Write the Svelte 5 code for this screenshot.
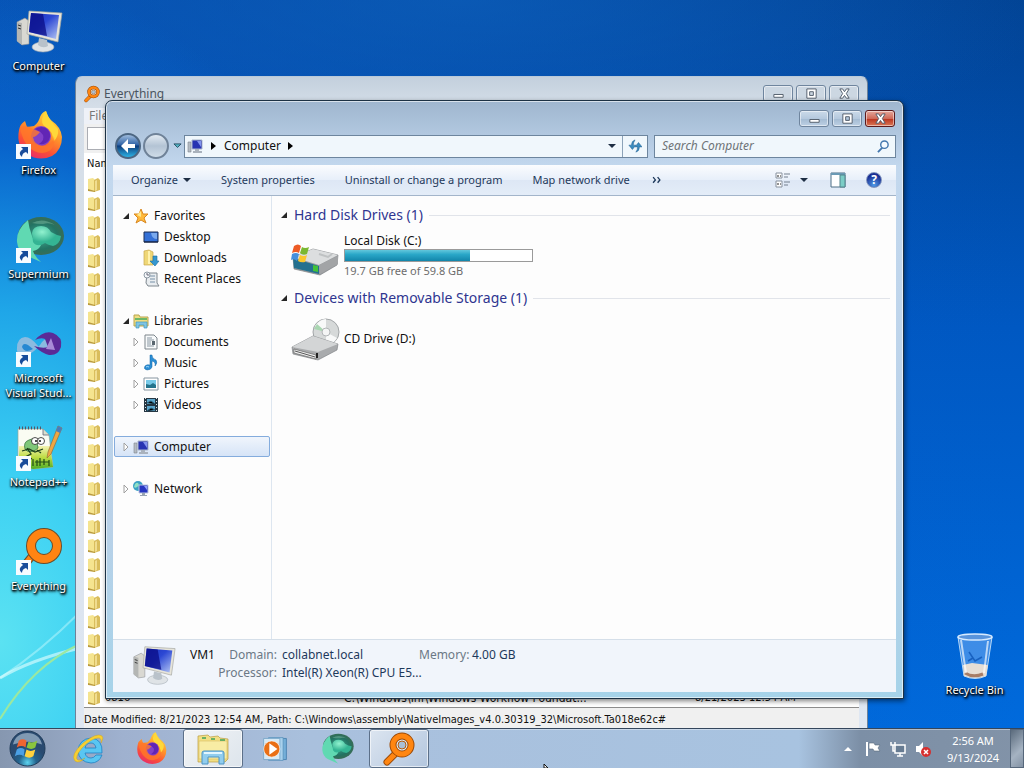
<script lang="ts">
	type TreeItem = { label: string; icon: string; selected?: boolean; children?: TreeItem[] };

	const shortcuts = [
		{ label: 'Computer', icon: 'computer', link: false },
		{ label: 'Firefox', icon: 'firefox', link: true },
		{ label: 'Supermium', icon: 'supermium', link: true },
		{ label: 'Microsoft Visual Stud...', icon: 'vstudio', link: true },
		{ label: 'Notepad++', icon: 'notepad', link: true },
		{ label: 'Everything', icon: 'ring', link: true }
	];

	const tree: TreeItem[] = [
		{
			label: 'Favorites',
			icon: 'star',
			children: [
				{ label: 'Desktop', icon: 'desktop' },
				{ label: 'Downloads', icon: 'downloads' },
				{ label: 'Recent Places', icon: 'recent' }
			]
		},
		{
			label: 'Libraries',
			icon: 'libraries',
			children: [
				{ label: 'Documents', icon: 'documents' },
				{ label: 'Music', icon: 'music' },
				{ label: 'Pictures', icon: 'pictures' },
				{ label: 'Videos', icon: 'videos' }
			]
		},
		{ label: 'Computer', icon: 'pc', selected: true },
		{ label: 'Network', icon: 'network' }
	];

	const commands = ['System properties', 'Uninstall or change a program', 'Map network drive'];

	const tasks = [
		{ label: 'Internet Explorer', icon: 'ie', open: false },
		{ label: 'Firefox', icon: 'firefox', open: false },
		{ label: 'Windows Explorer', icon: 'explorer', open: true, bright: true },
		{ label: 'Windows Media Player', icon: 'wmp', open: false },
		{ label: 'Supermium', icon: 'supermium', open: false },
		{ label: 'Everything', icon: 'magnifier', open: true }
	];

	const results = Array.from({ length: 28 }, (_, i) =>
		i === 27
			? {
					name: '0816',
					path: 'C:\\Windows\\Inf\\Windows Workflow Foundat...',
					date: '8/21/2023 12:54 AM'
				}
			: { name: '', path: '', date: '' }
	);

	const disk = { free: 19.7, total: 59.8 };
	const used = $derived(((disk.total - disk.free) / disk.total) * 100);

	let query = $state('');
	let filter = $state('');
</script>

{#snippet icon(name: string)}
	{#if name === 'computer'}
		<svg class="art" viewBox="0 0 48 48" aria-hidden="true">
			<path d="M2 14 10 10 14 13V36L7 37 2 33Z" fill="#d9d8d2" stroke="#8b8f94" stroke-width=".6" />
			<path d="M2 14 7 15V37L2 33Z" fill="#b4b6b4" />
			<path d="M3 17 6 18M3 20 6 21" stroke="#333" />
			<ellipse cx="28" cy="39" rx="11" ry="5" fill="#dfe3e6" stroke="#9fa8b0" stroke-width=".6" />
			<path d="M24 30 32 32 33 38Q28 41 23 37Z" fill="#b9c2ca" />
			<path d="M14 3 47 5 43 34 12 26Z" fill="#e6e4da" stroke="#a2a59f" stroke-width=".7" />
			<path d="M16 5 44 7 41 31 14 24Z" fill="url(#screen)" />
			<path d="M16 5 28 6 32 28 14 24Z" fill="#0a0c86" opacity=".75" />
		</svg>
	{:else if name === 'firefox'}
		<svg class="art" viewBox="0 0 48 48" aria-hidden="true">
			<path
				d="M4 18Q5 12 10 9L12 15 19 14Q24 10 25 5 27 0 31-1 32 5 37 9 46 15 47 25 47 38 37 44 24 50 12 42 1 34 4 18Z"
				fill="url(#fox)"
			/>
			<path d="M31-1Q24 8 29 14 39 19 38 30 44 25 43 17 34 8 31-1Z" fill="#ffd83a" />
			<circle cx="26" cy="24" r="10" fill="#8140c8" />
			<path d="M20 17Q27 13 32 17 37 22 34 28 31 33 24 32 30 28 28 23 25 19 20 17Z" fill="#6125b5" />
			<path d="M5 16Q12 12 18 17L25 20Q21 25 18 25 19 33 28 34 38 34 39 24 41 40 27 41 10 40 5 16Z" fill="#ff7829" opacity=".8" />
		</svg>
	{:else if name === 'supermium'}
		<svg class="art" viewBox="0 0 48 48" aria-hidden="true">
			<ellipse cx="26" cy="20" rx="23" ry="19" fill="url(#orb)" />
			<path d="M13 4Q1 14 2 26 3 35 10 39L26 46Q20 41 18 35 24 34 26 29 19 27 17 20 14 12 13 4Z" fill="#60d9b2" />
			<path d="M17 17Q18 10 26 10 33 10 36 16 41 19 46 20 45 28 38 30 33 29 30 27 22 32 18 26Z" fill="url(#mint)" />
			<path d="M17 7Q28 1 40 9 34 6 28 8 21 8 17 7Z" fill="#7bb79d" opacity=".5" />
		</svg>
	{:else if name === 'vstudio'}
		<svg class="art" viewBox="0 0 48 48" aria-hidden="true">
			<path d="M2 28Q2 18 10 17 16 17 23 26 29 34 37 31 44 26 38 20 30 16 25 25 14 38 6 35 1 33 2 28Z" fill="#8bbbe0" />
			<path d="M7 27Q8 22 13 25L18 29Q10 34 7 27Z" fill="#2688d2" />
			<path d="M20 20Q29 10 38 13 48 17 46 27 43 36 34 35 28 34 19 26Q28 29 33 27L30 19Q26 17 20 20Z" fill="#5b2a97" />
			<path d="M31 29 36 18 40 30Z" fill="#a98bd7" />
		</svg>
	{:else if name === 'notepad'}
		<svg class="art" viewBox="0 0 48 48" aria-hidden="true">
			<path d="M3 5H28L34 11 38 43 18 45 3 42Z" fill="#fafcf3" stroke="#9ba696" stroke-width=".7" />
			<path d="M4 22H35L38 43 18 45 4 42Z" fill="url(#lime)" />
			<path d="M4 4H28" stroke="#556" stroke-width="3" stroke-dasharray="1 2" />
			<path d="M28 5V11H34" fill="#d9dfcf" stroke="#667" stroke-width=".8" />
			<path d="M10 25Q8 18 14 16 20 13 22 18L23 24Q18 29 12 27Z" fill="#7fc779" stroke="#2d6a36" stroke-width=".7" />
			<circle cx="20" cy="17" r="3.500" fill="#fff" stroke="#222" stroke-width=".8" />
			<circle cx="26" cy="17" r="3.500" fill="#fff" stroke="#222" stroke-width=".8" />
			<circle cx="21" cy="17" r="1" fill="#111" /><circle cx="25" cy="17" r="1" fill="#111" />
			<path d="M7 27 14 25 20 28 28 25M12 24 16 30 12 32 17 35M22 26 26 29" fill="none" stroke="#20401c" stroke-width="1.300" />
			<path d="M18 42V35M22 42V36M25 42V34M29 41V35M34 42V36M20 38H34" stroke="#204b18" stroke-width="1.200" />
			<path d="M43 2 47 4 36 30 32 34 33 28Z" fill="#eea744" stroke="#8b6638" stroke-width=".6" />
			<path d="M43 2 47 4 45 9 41 7Z" fill="#487cbe" />
		</svg>
	{:else if name === 'ring'}
		<svg class="art" viewBox="0 0 48 48" aria-hidden="true">
			<path d="M17 28 5 43" stroke="#6b4c2a" stroke-width="8" />
			<path d="M17 28 5 43" stroke="#ff8413" stroke-width="6" />
			<circle cx="29" cy="18" r="13" fill="none" stroke="#6b4c2a" stroke-width="10" />
			<circle cx="29" cy="18" r="13" fill="none" stroke="#ff8413" stroke-width="8" />
		</svg>
	{:else if name === 'magnifier'}
		<svg class="art" viewBox="0 0 32 32" aria-hidden="true">
			<path d="M15 18 4 29" stroke="#9d4b08" stroke-width="7" stroke-linecap="round" />
			<path d="M15 18 4 29" stroke="#ff8611" stroke-width="5" stroke-linecap="round" />
			<circle cx="19" cy="12" r="9" fill="#dce8f2" stroke="#9d4b08" stroke-width="7" />
			<circle cx="19" cy="12" r="9" fill="none" stroke="#ff8611" stroke-width="5" />
			<circle cx="19" cy="12" r="4" fill="#a9bfd6" stroke="#b85d0c" />
		</svg>
	{:else if name === 'ie'}
		<svg class="art" viewBox="0 0 32 32" aria-hidden="true">
			<path
				d="M29 20H12Q13 25 18 25 21 25 23 22H29Q26 30 18 30 6 29 5 18 6 6 18 5 30 6 29 20ZM12 15H23Q22 10 18 10 13 10 12 15Z"
				fill="#59c6f2"
				fill-rule="evenodd"
				stroke="#1f82c4"
				stroke-width=".8"
			/>
			<path d="M2 28Q-3 22 10 10 24-1 29 3 31 5 28 10 29 5 25 5 19 5 9 15 1 25 5 27 8 28 12 25 6 31 2 28Z" fill="#f6cf31" stroke="#c99d18" stroke-width=".4" />
		</svg>
	{:else if name === 'explorer'}
		<svg class="art" viewBox="0 0 32 32" aria-hidden="true">
			<path d="M1 3 11 2 13 4 21 3 23 5 31 6V26L28 29H1Z" fill="#f2df83" stroke="#b99c42" stroke-width=".7" />
			<path d="M2 8H30V26H2Z" fill="#f8eca4" stroke="#d7bd61" stroke-width=".6" />
			<path d="M5 5H9M14 6H18M23 7H28" stroke="#40a35b" stroke-width="1.500" />
			<path d="M5 31V20Q5 18 7 18H25Q27 18 27 20V31H22V24H11V31Z" fill="#91cdee" stroke="#4c94c5" />
			<path d="M7 20H25" stroke="#e1f6ff" stroke-width="2" />
		</svg>
	{:else if name === 'wmp'}
		<svg class="art" viewBox="0 0 32 32" aria-hidden="true">
			<path d="M12 3H30V29H12Z" fill="#75afd9" stroke="#427dab" />
			<path d="M8 2H26V30H8Z" fill="#a9d1ec" stroke="#5a91bb" />
			<path d="M2 3H22V29H2Z" fill="#d6e9f5" stroke="#73a3c6" />
			<circle cx="12" cy="16" r="10" fill="#e96f16" stroke="#fff" stroke-width=".8" />
			<path d="M9 9 19 16 9 23Z" fill="#fff" />
		</svg>
	{:else if name === 'bin'}
		<svg class="art" viewBox="0 0 48 48" aria-hidden="true">
			<path d="M7 5 41 5 35 44Q24 49 13 44Z" fill="#9cc9ff" fill-opacity=".4" stroke="#b9d9f7" />
			<path d="M12 33 21 31 37 33 35 44Q24 48 13 44Z" fill="#e6ded5" />
			<path d="M14 41Q22 46 32 42" fill="none" stroke="#a77d67" stroke-width="3" />
			<ellipse cx="24" cy="5" rx="17" ry="3" fill="#5994dc" stroke="#d6eaff" stroke-width="1.500" />
			<path d="M10 8 15 41M37 9 33 41" stroke="#fff" opacity=".65" stroke-width="2" />
			<path d="M18 20 24 29 31 25M17 29 22 26" fill="none" stroke="#1861c0" stroke-width="1.500" />
		</svg>
	{:else if name === 'star'}
		<svg class="art" viewBox="0 0 16 16" aria-hidden="true">
			<path d="M8 1 10 6 15 6 11 10 13 15 8 12 3 15 5 10 1 6 6 6Z" fill="#ffb93b" stroke="#d88822" />
			<path d="M8 3V9L4 7" fill="#ffe98d" />
		</svg>
	{:else if name === 'desktop'}
		<svg class="art" viewBox="0 0 16 16" aria-hidden="true">
			<path d="M1 3H15V13H1Z" fill="#3470d6" stroke="#1d2f55" />
			<path d="M8 4 14 4 14 10Q9 10 8 4Z" fill="#79a9ee" /><path d="M1 13H15" stroke="#111c38" />
		</svg>
	{:else if name === 'downloads'}
		<svg class="art" viewBox="0 0 16 16" aria-hidden="true">
			<path d="M1 1 6 0 10 2V15H1Z" fill="#efd777" stroke="#c8a84a" stroke-width=".7" />
			<path d="M6 1V14" stroke="#fff2ad" stroke-width="2" />
			<path d="M10 6H14V11H16L12 16 7 11H10Z" fill="#3597cf" stroke="#1d6d9e" stroke-width=".6" />
		</svg>
	{:else if name === 'recent'}
		<svg class="art" viewBox="0 0 16 16" aria-hidden="true">
			<path d="M4 2H14V12L16 15H5L3 12Z" fill="#e9edf0" stroke="#7e878e" />
			<path d="M7 5H12M7 8H12M7 11H12" stroke="#7690a7" />
			<circle cx="4" cy="4" r="3" fill="#f4f7fa" stroke="#8f9ba5" /><path d="M4 2V4H6" fill="none" stroke="#667" />
		</svg>
	{:else if name === 'libraries'}
		<svg class="art" viewBox="0 0 16 16" aria-hidden="true">
			<path d="M1 2H6L7 4H15V13H1Z" fill="#efdd82" stroke="#b9a54e" />
			<path d="M2 6H14" stroke="#6db868" stroke-width="2" />
			<path d="M3 15V9H14V15H11V12H6V15Z" fill="#80c5e3" stroke="#4398bf" stroke-width=".7" />
		</svg>
	{:else if name === 'documents'}
		<svg class="art" viewBox="0 0 16 16" aria-hidden="true">
			<path d="M2 1H11L14 4V15H2Z" fill="#f8fafb" stroke="#7c858b" />
			<path d="M4 4H9M4 6H11M4 8H8M4 10H8M4 12H11" stroke="#8997a2" /><path d="M9 7H12V11H9Z" fill="#59666f" />
		</svg>
	{:else if name === 'music'}
		<svg class="art" viewBox="0 0 16 16" aria-hidden="true">
			<path d="M7 0H9Q9 4 13 5 15 8 12 11 13 7 9 6V12Q8 15 4 15 0 14 2 11 4 9 7 10Z" fill="#2b8ed5" stroke="#1767a5" stroke-width=".5" />
			<path d="M3 12Q4 11 6 12" stroke="#a7dcfa" fill="none" />
		</svg>
	{:else if name === 'pictures'}
		<svg class="art" viewBox="0 0 16 16" aria-hidden="true">
			<path d="M1 2H15V14H1Z" fill="#fff" stroke="#8695a0" /><path d="M3 4H13V12H3Z" fill="#76c9e8" />
			<path d="M3 8 7 9 10 7 13 9V12H3Z" fill="#23738c" />
		</svg>
	{:else if name === 'videos'}
		<svg class="art" viewBox="0 0 16 16" aria-hidden="true">
			<path d="M1 1H15V15H1Z" fill="#263743" /><path d="M4 2H12V7H4ZM4 9H12V14H4Z" fill="#5ba5cb" />
			<path d="M2.500 1V15M13.500 1V15" stroke="#dce6ea" stroke-dasharray="1 2" /><path d="M4 6 8 4 12 7M4 14 8 11 12 13" stroke="#275d79" />
		</svg>
	{:else if name === 'pc'}
		<svg class="art" viewBox="0 0 16 16" aria-hidden="true">
			<path d="M1 4H4V14H1Z" fill="#b5bcc4" stroke="#7c858f" stroke-width=".6" />
			<path d="M5 2H15V11H5Z" fill="#2733b2" stroke="#a9b5ca" /><path d="M10 3H14V9Z" fill="#8394ee" />
			<path d="M8 11H12V13H15V15H6V13H8Z" fill="#a9b2bd" />
		</svg>
	{:else if name === 'network'}
		<svg class="art" viewBox="0 0 16 16" aria-hidden="true">
			<circle cx="5" cy="5" r="5" fill="#3aa0c5" /><path d="M2 3Q5 0 6 4 3 8 1 6Z" fill="#8fe1c5" />
			<path d="M6 4H15V12H6Z" fill="#2736c1" stroke="#bcc7de" /><path d="M11 5H14V9Z" fill="#91a2ff" />
			<path d="M9 12H12V14H14V15H7V14H9Z" fill="#98a4b2" />
		</svg>
	{:else if name === 'disk'}
		<svg class="art" viewBox="0 0 48 48" aria-hidden="true">
			<path d="M2 25 22 17 47 23 46 33 29 43 3 37Z" fill="#9a9da0" stroke="#73777a" stroke-width=".6" />
			<path d="M2 25 22 17 47 23 28 33Z" fill="#dcdedf" /><path d="M2 26 28 34V42L3 36Z" fill="#25718f" />
			<path d="M28 33 47 24V32L29 42Z" fill="#a2a4a6" /><path d="M22 33 27 34V40L22 39Z" fill="#43c339" />
			<path d="M28 22 37 25 41 22" fill="none" stroke="#bfc2c3" stroke-width="2" />
			<path d="M3 14Q7 11 10 14L8 21Q5 19 1 21Z" fill="#ed5b26" /><path d="M11 15Q14 17 18 15L16 22Q12 24 9 21Z" fill="#7ab832" />
			<path d="M1 22Q5 20 8 22L6 29Q3 26 0 28Z" fill="#448fdd" /><path d="M9 23Q13 25 16 23L14 30Q10 31 7 29Z" fill="#fac72d" />
		</svg>
	{:else if name === 'cd'}
		<svg class="art" viewBox="0 0 48 48" aria-hidden="true">
			<circle cx="35" cy="17" r="13" fill="#d6d9d9" stroke="#a2a6a8" />
			<path d="M35 17 24 11Q29 4 35 4ZM35 17 46 23Q42 30 35 30Z" fill="#f8f9f9" /><path d="M35 17 23 14 26 9Z" fill="#a9d6b1" />
			<circle cx="35" cy="17" r="4" fill="#f4f5f5" stroke="#b1b5b7" />
			<path d="M1 32 22 21 47 29 46 35 27 45 2 39Z" fill="#a9abad" stroke="#777b7e" stroke-width=".6" />
			<path d="M1 32 22 21 47 29 27 37Z" fill="#d3d5d6" /><path d="M3 34 25 40V44L3 38Z" fill="#f2f2f2" stroke="#666" stroke-width=".7" />
			<path d="M4 36 24 42" stroke="#555" /><path d="M26 38V43" stroke="#222" stroke-width="2" />
		</svg>
	{/if}
{/snippet}

{#snippet captionButtons()}
	<div class="caption-buttons">
		<button aria-label="Minimize">
			<svg viewBox="0 0 14 12"><path d="M2 7H12V10H2Z" fill="#fff" stroke="#4f5a68" /></svg>
		</button>
		<button aria-label="Maximize">
			<svg viewBox="0 0 14 12"><path d="M2 1H12V11H2ZM5 4V8H9V4Z" fill="#fff" fill-rule="evenodd" stroke="#4f5a68" /></svg>
		</button>
		<button class="close" aria-label="Close">
			<svg viewBox="0 0 14 12"><path d="M2 1H5L7 4 9 1H12L9 6 12 11H9L7 8 5 11H2L5 6Z" fill="#fff" stroke="#4f5a68" /></svg>
		</button>
	</div>
{/snippet}

{#snippet treeRow(item: TreeItem, child: boolean, parent: TreeItem | null)}
	<button class="tree-row" class:child class:selected={item.selected}>
		<svg class="twisty" viewBox="0 0 8 8" aria-hidden="true">
			{#if item.children}
				<path d="M7 1V7H1Z" fill="#262626" />
			{:else if parent?.label !== 'Favorites'}
				<path d="M2 0 6 4 2 8Z" fill="#fff" stroke="#a0a0a0" />
			{/if}
		</svg>
		<span class="icon16">{@render icon(item.icon)}</span>
		{item.label}
	</button>
{/snippet}

<svg class="defs" aria-hidden="true">
	<defs>
		<linearGradient id="screen" x1="0" x2="1" y1="0" y2="1">
			<stop offset="0" stop-color="#1b2fbc" /><stop offset=".45" stop-color="#2c48d4" /><stop offset="1" stop-color="#b5c7f4" />
		</linearGradient>
		<linearGradient id="fox" x1=".8" x2=".3" y1="0" y2="1">
			<stop offset="0" stop-color="#ffe640" /><stop offset=".45" stop-color="#ff922a" /><stop offset=".75" stop-color="#fb4e37" /><stop offset="1" stop-color="#e62b6d" />
		</linearGradient>
		<radialGradient id="orb">
			<stop offset="0" stop-color="#42aa91" /><stop offset=".7" stop-color="#237363" /><stop offset="1" stop-color="#386d56" />
		</radialGradient>
		<radialGradient id="mint" cx=".35" cy=".3">
			<stop offset="0" stop-color="#91f2cf" /><stop offset="1" stop-color="#34b493" />
		</radialGradient>
		<linearGradient id="lime" x1="0" x2="0" y1="0" y2="1">
			<stop offset="0" stop-color="#f3f3b2" /><stop offset=".5" stop-color="#bddc43" /><stop offset="1" stop-color="#4eac27" />
		</linearGradient>
		<radialGradient id="start" cx=".5" cy=".9">
			<stop offset="0" stop-color="#5cd3ef" /><stop offset=".5" stop-color="#23638e" /><stop offset="1" stop-color="#294a70" />
		</radialGradient>
	</defs>
</svg>

<div class="screen">
	<main class="desktop">
		<svg class="streaks" viewBox="0 0 120 130" aria-hidden="true">
			<path d="M0 78Q40 52 80 12" stroke="#dcffff" stroke-width="2" opacity=".4" />
			<path d="M0 78Q30 60 80 48" stroke="#e6ffff" stroke-width="3" opacity=".6" />
			<path d="M0 119Q32 66 80 44" stroke="#9be8a0" stroke-width="2" />
		</svg>

		<nav class="shortcuts" aria-label="Desktop">
			{#each shortcuts as s (s.label)}
				<button class="shortcut">
					<span class="icon48">
						{@render icon(s.icon)}
						{#if s.link}
							<svg class="link-mark" viewBox="0 0 15 15" aria-hidden="true">
								<path d="M0 0H15V15H0Z" fill="#f7fbff" /><path d="M5 3H12V10L10 8Q6 9 6 13 1 9 7 5Z" fill="#174c9b" />
							</svg>
						{/if}
					</span>
					<span>{s.label}</span>
				</button>
			{/each}
		</nav>

		<button class="shortcut recycle">
			<span class="icon48">{@render icon('bin')}</span>
			<span>Recycle Bin</span>
		</button>

		<section class="window everything" aria-label="Everything">
			<header>
				<span class="icon16">{@render icon('magnifier')}</span>
				<span class="title">Everything</span>
				{@render captionButtons()}
			</header>
			<div class="menu">File</div>
			<div class="filter"><input aria-label="Search" bind:value={filter} /></div>
			<div class="list">
				<table>
					<thead>
						<tr><th>Name</th><th>Path</th><th>Date Modified</th></tr>
					</thead>
					<tbody>
						{#each results as r}
							<tr>
								<td>
									<svg class="folder" viewBox="0 0 16 16" aria-hidden="true">
										<path d="M2 2 7 1 9 3V15L2 13Z" fill="#f5e48f" /><path d="M8 3 12 1 14 3V13L8 15Z" fill="#d9bd5c" />
										<path d="M9 4 11 3V13L9 14Z" fill="#f0dd90" /><path d="M2 12 9 14V15L2 14Z" fill="#b99a3e" />
									</svg>{r.name}
								</td>
								<td class="path">{r.path}</td>
								<td>{r.date}</td>
							</tr>
						{/each}
					</tbody>
				</table>
			</div>
			<footer>Date Modified: 8/21/2023 12:54 AM, Path: C:\Windows\assembly\NativeImages_v4.0.30319_32\Microsoft.Ta018e62c#</footer>
		</section>

		<section class="window explorer" aria-label="Computer">
			<header>{@render captionButtons()}</header>

			<div class="nav-row">
				<button class="round back" aria-label="Back">
					<svg viewBox="0 0 16 16"><path d="M8 1 1 8 8 15V10H15V6H8Z" fill="#fff" /></svg>
				</button>
				<button class="round" aria-label="Forward"></button>
				<button class="plain pages" aria-label="Recent pages">
					<svg viewBox="0 0 10 6"><path d="M1 1H9L5 5Z" fill="#53b3c5" stroke="#244b60" /></svg>
				</button>
				<div class="address">
					<span class="icon16">{@render icon('pc')}</span>
					<svg class="chevron" viewBox="0 0 5 8"><path d="M0 0 5 4 0 8Z" /></svg>
					<a href="#computer">Computer</a>
					<svg class="chevron" viewBox="0 0 5 8"><path d="M0 0 5 4 0 8Z" /></svg>
					<button class="plain history" aria-label="Previous locations">
						<svg viewBox="0 0 8 4"><path d="M0 0H8L4 4Z" /></svg>
					</button>
					<button class="plain refresh" aria-label="Refresh">
						<svg viewBox="0 0 16 16">
							<path d="M8 1Q4 2 4 7H1L5 12 9 7H6Q6 4 8 1Z" fill="#3b8cc0" stroke="#235f92" stroke-width=".6" />
							<path d="M9 15Q13 14 13 9H16L12 4 8 9H11Q11 12 9 15Z" fill="#3b8cc0" stroke="#235f92" stroke-width=".6" />
						</svg>
					</button>
				</div>
				<div class="search">
					<input placeholder="Search Computer" aria-label="Search Computer" bind:value={query} />
					<svg viewBox="0 0 14 14" aria-hidden="true">
						<path d="M6 8 1 13" stroke="#4276ad" stroke-width="2" /><circle cx="8" cy="5" r="4" fill="#f4faff" stroke="#4276ad" stroke-width="1.500" />
					</svg>
				</div>
			</div>

			<div class="client">
				<div class="toolbar">
					<button class="plain">
						Organize
						<svg class="caret" viewBox="0 0 8 4"><path d="M0 0H8L4 4Z" /></svg>
					</button>
					{#each commands as command (command)}
						<button class="plain">{command}</button>
					{/each}
					<button class="plain overflow" aria-label="More commands">
						<svg class="more" viewBox="0 0 8 7"><path d="M1 1 3 3.500 1 6M5 1 7 3.500 5 6" fill="none" stroke="#1e395b" stroke-width="1.200" /></svg>
					</button>
					<div class="tools">
						<button class="plain" aria-label="Change your view">
							<svg class="tool" viewBox="0 0 16 16">
								<path d="M1 1H7V6H1ZM1 9H7V15H1Z" fill="#fff" stroke="#87919e" /><path d="M2 4H4M5 4H6M2 12H4M5 12H6" stroke="#222" />
								<path d="M9 2H15M9 5H13M9 10H15M9 13H13" stroke="#75808f" />
							</svg>
						</button>
						<button class="plain" aria-label="More options">
							<svg class="caret" viewBox="0 0 8 4"><path d="M0 0H8L4 4Z" /></svg>
						</button>
						<button class="plain pane" aria-label="Show the preview pane">
							<svg class="tool" viewBox="0 0 16 16">
								<path d="M1 1H15V15H1Z" fill="#fff" stroke="#4d6f86" /><path d="M1 2H15" stroke="#6b9ab5" stroke-width="2" />
								<path d="M10 3H15V15H10Z" fill="#7bcdc6" stroke="#52848c" />
							</svg>
						</button>
						<button class="plain help" aria-label="Help">?</button>
					</div>
				</div>

				<div class="body">
					<aside>
						{#each tree as group (group.label)}
							<div class="tree-group">
								{@render treeRow(group, false, null)}
								{#each group.children ?? [] as item (item.label)}
									{@render treeRow(item, true, group)}
								{/each}
							</div>
						{/each}
					</aside>

					<div class="content">
						<h2>
							<svg class="twisty" viewBox="0 0 8 8"><path d="M7 1V7H1Z" fill="#262626" /></svg>
							Hard Disk Drives (1)
						</h2>
						<div class="tile">
							<span class="icon48">{@render icon('disk')}</span>
							<div class="drive">
								<span>Local Disk (C:)</span>
								<div class="capacity"><div class="used" style="width: {used}%"></div></div>
								<span class="muted">{disk.free} GB free of {disk.total} GB</span>
							</div>
						</div>
						<h2>
							<svg class="twisty" viewBox="0 0 8 8"><path d="M7 1V7H1Z" fill="#262626" /></svg>
							Devices with Removable Storage (1)
						</h2>
						<div class="tile">
							<span class="icon48">{@render icon('cd')}</span>
							<span>CD Drive (D:)</span>
						</div>
					</div>
				</div>

				<div class="details">
					<span class="icon44">{@render icon('computer')}</span>
					<dl>
						<dd class="host">VM1</dd>
						<dt>Domain:</dt>
						<dd>collabnet.local</dd>
						<dt>Memory:</dt>
						<dd>4.00 GB</dd>
						<dt class="second">Processor:</dt>
						<dd>Intel(R) Xeon(R) CPU E5...</dd>
					</dl>
				</div>
			</div>
		</section>
	</main>

	<footer class="taskbar">
		<button class="plain start" aria-label="Start">
			<svg viewBox="0 0 38 38">
				<circle cx="19" cy="19" r="18" fill="url(#start)" stroke="#203c58" />
				<path d="M4 15Q7 3 19 3 31 3 34 15 20 9 4 15Z" fill="#d7e9f5" opacity=".5" />
				<path d="M10 11Q14 8 18 11L17 18Q13 15 8 18Z" fill="#ef6531" />
				<path d="M20 12Q24 14 29 11L27 18Q23 21 18 18Z" fill="#8ac53e" />
				<path d="M8 20Q12 17 16 20L15 27Q11 24 6 27Z" fill="#4ba0e5" />
				<path d="M18 20Q22 23 27 20L25 27Q21 30 16 27Z" fill="#ffd23e" />
			</svg>
		</button>
		<div class="tasks">
			{#each tasks as task (task.label)}
				<button class="task" class:open={task.open} class:bright={task.bright} aria-label={task.label}>
					<span class="icon32" class:small={task.icon === 'wmp'}>{@render icon(task.icon)}</span>
				</button>
			{/each}
		</div>
		<div class="tray">
			<button class="plain" aria-label="Show hidden icons">
				<svg class="tray-up" viewBox="0 0 8 4"><path d="M0 4H8L4 0Z" fill="#fff" /></svg>
			</button>
			<button class="plain" aria-label="Action Center">
				<svg class="tool" viewBox="0 0 16 16"><path d="M2 1V15" stroke="#fff" stroke-width="2" /><path d="M4 2H9L10 4H15L13 7 15 10H9L8 8H4Z" fill="#fff" stroke="#58687b" stroke-width=".6" /></svg>
			</button>
			<button class="plain" aria-label="Network">
				<svg class="tool" viewBox="0 0 16 16"><path d="M5 4H15V12H5Z" fill="#667b92" stroke="#fff" stroke-width="1.500" /><path d="M7 15H13M10 12V15M1 1V4H5V1M3 4V10H5" fill="none" stroke="#fff" stroke-width="1.500" /></svg>
			</button>
			<button class="plain" aria-label="Volume">
				<svg class="tool" viewBox="0 0 16 16"><path d="M1 5H4L8 1V15L4 11H1Z" fill="#fff" /><circle cx="11" cy="11" r="5" fill="#d62f2f" /><path d="M9 9 13 13M13 9 9 13" stroke="#fff" stroke-width="1.500" /></svg>
			</button>
			<div class="clock"><span>2:56 AM</span><span>9/13/2024</span></div>
			<button class="show-desktop" aria-label="Show desktop"></button>
		</div>
		<svg class="pointer" viewBox="0 0 6 4" aria-hidden="true"><path d="M1 0 5 4H1Z" fill="#fff" stroke="#111" /></svg>
	</footer>
</div>

<style>
	:global(body) {
		margin: 0;
		overflow: hidden;
	}
	.defs {
		position: absolute;
		width: 0;
		height: 0;
	}
	.screen {
		display: flex;
		flex-direction: column;
		height: 100vh;
		font: 12px/16px 'Noto Sans', 'Open Sans', sans-serif;
		color: #111;
	}
	button {
		font: inherit;
		color: inherit;
		padding: 0;
	}
	svg {
		flex: none;
	}
	.plain {
		display: flex;
		align-items: center;
		justify-content: center;
		border: none;
		background: none;
	}
	.art {
		display: block;
		width: 100%;
		height: 100%;
		overflow: visible;
	}
	.icon16,
	.icon32,
	.icon44,
	.icon48 {
		flex: none;
		width: 16px;
		height: 16px;
	}
	.icon32 {
		width: 32px;
		height: 32px;
	}
	.icon32.small {
		width: 26px;
		height: 26px;
	}
	.icon44 {
		width: 44px;
		height: 44px;
	}
	.icon48 {
		position: relative;
		width: 48px;
		height: 48px;
	}
	.desktop {
		position: relative;
		flex: 1;
		min-height: 0;
		overflow: hidden;
		background:
			radial-gradient(ellipse 440px 660px at 0 88%, #5be2f2 0%, #3cd0f3 25%, #1fa6e8 50%, rgb(10 110 215 / 60%) 75%, transparent 100%),
			radial-gradient(ellipse 600px 160px at 45% 0, rgb(14 98 190 / 60%), transparent),
			linear-gradient(90deg, rgb(8 90 200 / 60%), transparent),
			linear-gradient(#024394, #0058c2 45%, #006adc);
	}
	.streaks {
		position: absolute;
		left: 0;
		bottom: -2px;
		width: 120px;
		fill: none;
	}
	.shortcuts {
		display: flex;
		flex-direction: column;
		width: 78px;
		padding-top: 8px;
	}
	.shortcut {
		display: flex;
		flex-direction: column;
		align-items: center;
		gap: 2px;
		width: 77px;
		height: 104px;
		border: none;
		background: none;
		color: #fff;
		font-size: 11px;
		line-height: 15px;
		text-shadow:
			0 1px 2px #000,
			1px 1px 2px #000,
			1px 2px 3px #000;
	}
	.link-mark {
		position: absolute;
		left: 1px;
		bottom: 1px;
		width: 15px;
	}
	.recycle {
		position: absolute;
		right: 11px;
		bottom: -8px;
	}
	.window {
		position: absolute;
		display: flex;
		flex-direction: column;
		box-sizing: border-box;
		border-radius: 7px 7px 0 0;
	}
	.caption-buttons {
		display: flex;
		gap: 3px;
		margin-left: auto;
	}
	.caption-buttons button {
		display: flex;
		align-items: center;
		justify-content: center;
		box-sizing: border-box;
		width: 30px;
		height: 17px;
		border: 1px solid #6f859e;
		border-radius: 3px;
		background: linear-gradient(#cbdae9, #b5c9de 50%, #a2bad2 50%, #bdd0e4);
		box-shadow: inset 0 0 0 1px rgb(255 255 255 / 50%);
	}
	.caption-buttons svg {
		width: 13px;
	}
	.everything {
		inset: 76px 156px 0 75px;
		padding: 0 8px;
		border: 1px solid #6d8299;
		border-top-color: #b9c9d9;
		border-bottom: none;
		background: linear-gradient(#c3d0dd, #d5dee8 30px, #dfe7f2);
		font: 11px/14px 'DejaVu Sans Condensed', sans-serif;
	}
	.everything header {
		display: flex;
		align-items: center;
		gap: 4px;
		height: 29px;
		padding-top: 2px;
		font: 12px/16px 'Noto Sans', sans-serif;
		color: #4b5560;
	}
	.everything .caption-buttons button {
		background: #ccd7e2;
	}
	.menu {
		padding: 0 5px;
		background: #eef1f7;
		font: 12px/16px 'Noto Sans', sans-serif;
		color: #777;
	}
	.filter {
		display: flex;
		padding: 3px;
		background: #f0f0f0;
	}
	.filter input {
		flex: 1;
		height: 19px;
		border: 1px solid #abadb3;
		background: #fff;
	}
	.list {
		flex: 1;
		min-height: 0;
		overflow: hidden;
		background: #fff;
	}
	table {
		width: 100%;
		border-collapse: collapse;
		table-layout: fixed;
	}
	th,
	td {
		height: 19px;
		padding: 0;
		text-align: left;
		font-weight: normal;
		white-space: nowrap;
	}
	th {
		height: 22px;
		padding-left: 3px;
	}
	th:first-child {
		width: 257px;
	}
	th:nth-child(2) {
		width: 348px;
	}
	.path {
		font-size: 12px;
	}
	.folder {
		width: 16px;
		height: 16px;
		margin: 0 3px 0 2px;
		vertical-align: middle;
	}
	.everything footer {
		height: 20px;
		border-top: 1px solid #8c8c8c;
		background: #f0f0f0;
		line-height: 24px;
		white-space: nowrap;
	}
	.explorer {
		inset: 100px 120px 29px 105px;
		padding: 0 7px 6px;
		border: 1px solid #1c3144;
		background: linear-gradient(#9fb6cf, #b5cbe3 40px, #c3d8ee 66px, #b9d1e8 70%, #a6d3e9);
		box-shadow:
			inset 0 0 0 1px rgb(255 255 255 / 60%),
			1px 2px 5px rgb(0 0 0 / 50%);
	}
	.explorer header {
		display: flex;
		padding: 9px 1px 7px;
	}
	.explorer .close {
		border-color: #5b1a1c;
		background: linear-gradient(#e5a79b, #cf6a59 50%, #b8301c 50%, #db7856);
	}
	.nav-row {
		display: flex;
		align-items: center;
		height: 24px;
		padding: 0 0 7px 2px;
	}
	.round {
		display: flex;
		align-items: center;
		justify-content: center;
		box-sizing: border-box;
		width: 26px;
		height: 26px;
		margin-right: 2px;
		border: 2px solid #6f8298;
		border-radius: 50%;
		background: linear-gradient(#e2eaf2, #b3c3d4 50%, #cfdce8);
	}
	.round.back {
		border-color: #4c6682;
		background: linear-gradient(#9ebbdd, #2f62a5 45%, #0e3c7c 50%, #2cb2e4);
	}
	.round svg {
		width: 16px;
	}
	.pages {
		width: 13px;
	}
	.pages svg {
		width: 9px;
	}
	.address,
	.search {
		display: flex;
		align-items: center;
		box-sizing: border-box;
		height: 23px;
		border: 1px solid #6d859e;
		background: #f0f7fc;
	}
	.address {
		flex: 1;
		margin-right: 6px;
		padding-left: 2px;
	}
	.address a {
		margin: 0 7px 0 8px;
		color: #111;
		text-decoration: none;
	}
	.chevron {
		width: 5px;
	}
	.address .icon16 {
		margin-right: 8px;
	}
	.history {
		width: 20px;
		margin-left: auto;
	}
	.history svg,
	.caret {
		width: 8px;
		fill: #1e2e44;
	}
	.refresh {
		width: 25px;
		height: 21px;
		border-left: 1px solid #8ca2b8;
	}
	.refresh svg {
		width: 14px;
	}
	.search {
		width: 242px;
		padding: 0 5px 0 7px;
	}
	.search input {
		flex: 1;
		min-width: 0;
		padding: 0;
		border: none;
		outline: none;
		background: none;
		font: italic 12px/16px 'Noto Sans', sans-serif;
	}
	.search input::placeholder {
		color: #6d7377;
	}
	.search svg {
		width: 13px;
	}
	.client {
		display: flex;
		flex: 1;
		flex-direction: column;
		min-height: 0;
		background: #fdfdfd;
	}
	.toolbar {
		display: flex;
		align-items: center;
		gap: 30px;
		box-sizing: border-box;
		height: 31px;
		padding: 0 14px 0 18px;
		border-bottom: 1px solid #a3b5ca;
		background: linear-gradient(#fbfcfe, #e7effa 50%, #dde7f5 50%, #e4edf8);
		color: #1e395b;
		font-size: 11px;
		white-space: nowrap;
	}
	.toolbar .caret {
		margin-left: 5px;
	}
	.overflow {
		margin-left: -8px;
	}
	.more {
		width: 9px;
	}
	.tools {
		display: flex;
		align-items: center;
		margin-left: auto;
	}
	.tool {
		width: 16px;
		height: 16px;
	}
	.tools .caret {
		margin: 0 22px 0 9px;
	}
	.pane {
		margin-right: 20px;
	}
	.help {
		box-sizing: border-box;
		width: 16px;
		height: 16px;
		border: 1px solid #8093bd;
		border-radius: 50%;
		background: radial-gradient(circle at 50% 85%, #4f9ae6, #1b2f94 70%);
		color: #fff;
		font-size: 12px;
		font-weight: bold;
	}
	.body {
		display: flex;
		flex: 1;
		min-height: 0;
	}
	aside {
		display: flex;
		flex-direction: column;
		gap: 21px;
		box-sizing: border-box;
		width: 159px;
		padding: 9px 1px;
		border-right: 1px solid #dde6f0;
	}
	.tree-row {
		display: flex;
		align-items: center;
		box-sizing: border-box;
		width: 100%;
		height: 21px;
		padding-left: 7px;
		border: 1px solid transparent;
		border-radius: 2px;
		background: none;
		white-space: nowrap;
	}
	.tree-row.child {
		padding-left: 17px;
	}
	.tree-row.selected {
		border-color: #84acdd;
		background: linear-gradient(#f0f5fc, #d6e4f7);
	}
	.tree-row .icon16 {
		margin: 0 5px 0 3px;
	}
	.twisty {
		width: 8px;
		height: 8px;
	}
	.content {
		flex: 1;
		padding: 8px 6px 0 8px;
	}
	h2 {
		display: flex;
		align-items: center;
		gap: 6px;
		height: 22px;
		margin: 0;
		color: #2f3590;
		font-size: 14px;
		font-weight: normal;
		white-space: nowrap;
	}
	h2::after {
		content: '';
		flex: 1;
		height: 1px;
		background: #e1e4ea;
	}
	.tile {
		display: flex;
		align-items: center;
		gap: 5px;
		box-sizing: border-box;
		height: 61px;
		padding: 0 0 2px 11px;
	}
	.drive {
		display: flex;
		flex-direction: column;
		line-height: 17px;
	}
	.capacity {
		box-sizing: border-box;
		width: 189px;
		height: 13px;
		border: 1px solid #9a9a9a;
		background: #fff;
	}
	.used {
		height: 100%;
		background: linear-gradient(#62c7dc, #2aa7c8 40%, #1285aa);
	}
	.muted {
		color: #6d6d6d;
		font-size: 11px;
	}
	.details {
		display: flex;
		align-items: center;
		gap: 14px;
		box-sizing: border-box;
		height: 53px;
		padding-left: 19px;
		border-top: 1px solid #d5dfe9;
		background: #f1f5fb;
	}
	dl {
		display: grid;
		grid-template-columns: 30px 52px 132px 48px auto;
		column-gap: 5px;
		row-gap: 2px;
		margin: 0;
		padding-bottom: 4px;
		white-space: nowrap;
	}
	dt {
		color: #6b7885;
		text-align: right;
	}
	dt.second {
		grid-column: 1 / 3;
	}
	dd {
		margin: 0;
		color: #1e395b;
	}
	dd.host {
		color: #111;
	}
	.taskbar {
		position: relative;
		display: flex;
		box-sizing: border-box;
		height: 40px;
		border-top: 1px solid #34465c;
		background: linear-gradient(90deg, #8697b0, #9fb1cf 12%, #a9c0dd 30%, #a8c3e0 78%, #7c8fa6 84%, #8293a8);
		box-shadow: inset 0 1px rgb(255 255 255 / 40%);
	}
	.start {
		width: 54px;
		margin-right: 5px;
	}
	.start svg {
		width: 37px;
	}
	.tasks {
		display: flex;
		gap: 2px;
	}
	.task {
		display: flex;
		align-items: center;
		justify-content: center;
		width: 60px;
		box-sizing: border-box;
		border: 1px solid transparent;
		border-radius: 3px;
		background: none;
	}
	.task.open {
		border-color: #5c7089;
		background: linear-gradient(135deg, #dce5f0, #b3c6de);
		box-shadow: inset 0 0 0 1px rgb(255 255 255 / 60%);
	}
	.task.bright {
		background: linear-gradient(135deg, #f2f4f6, #dde5ec);
	}
	.tray {
		display: flex;
		align-items: center;
		gap: 9px;
		margin-left: auto;
		color: #fff;
	}
	.tray-up {
		width: 8px;
		margin-right: 4px;
	}
	.clock {
		display: flex;
		flex-direction: column;
		align-items: center;
		width: 66px;
		margin-right: -5px;
		font-size: 11px;
		line-height: 17px;
	}
	.show-desktop {
		align-self: stretch;
		width: 14px;
		border: 1px solid #56677b;
		background: linear-gradient(135deg, #5a6a7c, #a5b3c2 60%, #8392a4);
	}
	.pointer {
		position: absolute;
		left: 53%;
		bottom: 0;
		width: 6px;
	}
</style>
